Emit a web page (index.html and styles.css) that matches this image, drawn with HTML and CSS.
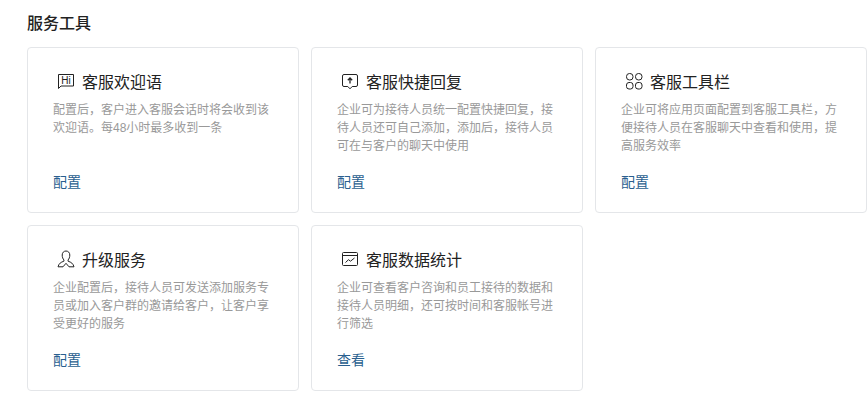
FILE: index.html
```html
<!DOCTYPE html>
<html lang="zh-CN">
<head>
    <meta charset="UTF-8">
    <title>服务工具</title>
    <link rel="stylesheet" href="styles.css">
</head>
<body>
    <h2 class="section-title">服务工具</h2>
    <div class="cards">
        <div class="card">
            <div class="card-head">
                <svg class="icon" viewBox="0 0 18 18"><path d="M1.500 2.500h15v11.500H4l-2.500 2.500z"/><text class="icon-text" x="9" y="12.300" text-anchor="middle">Hi</text></svg>
                <span class="card-title">客服欢迎语</span>
            </div>
            <p class="card-desc">配置后，客户进入客服会话时将会收到该欢迎语。每48小时最多收到一条</p>
            <a class="card-link">配置</a>
        </div>
        <div class="card">
            <div class="card-head">
                <svg class="icon" viewBox="0 0 18 18"><path d="M3 2.500h12A1.500 1.500 0 0 1 16.500 4v9a1.500 1.500 0 0 1-1.500 1.500h-3.800L9 16.800l-2.200-2.300H3A1.500 1.500 0 0 1 1.500 13V4A1.500 1.500 0 0 1 3 2.500z"/><path d="M9 11.500V6M6.800 8.200L9 6l2.200 2.200" class="icon-bold"/></svg>
                <span class="card-title">客服快捷回复</span>
            </div>
            <p class="card-desc">企业可为接待人员统一配置快捷回复，接待人员还可自己添加，添加后，接待人员可在与客户的聊天中使用</p>
            <a class="card-link">配置</a>
        </div>
        <div class="card">
            <div class="card-head">
                <svg class="icon" viewBox="0 0 18 18"><rect x="1.500" y="1.500" width="6.500" height="6.500" rx="3"/><rect x="10.500" y="1.500" width="6.500" height="6.500" rx="3"/><rect x="1.500" y="10.500" width="6.500" height="6.500" rx="2.500"/><rect x="10.500" y="10.500" width="6.500" height="6.500" rx="2.500"/></svg>
                <span class="card-title">客服工具栏</span>
            </div>
            <p class="card-desc">企业可将应用页面配置到客服工具栏，方便接待人员在客服聊天中查看和使用，提高服务效率</p>
            <a class="card-link">配置</a>
        </div>
        <div class="card">
            <div class="card-head">
                <svg class="icon" viewBox="0 0 18 18"><path d="M9 1C6.800 1 5.200 2.700 5.200 5c0 2.200.7 3.900 1.800 5l-.2 1.300C4 12 1.800 13.600 1 16.800h5l3-3.500 3 3.500h5c-.8-3.200-3-4.800-5.800-5.500L11 10c1.100-1.100 1.800-2.800 1.800-5 0-2.300-1.600-4-3.800-4z"/></svg>
                <span class="card-title">升级服务</span>
            </div>
            <p class="card-desc">企业配置后，接待人员可发送添加服务专员或加入客户群的邀请给客户，让客户享受更好的服务</p>
            <a class="card-link">配置</a>
        </div>
        <div class="card">
            <div class="card-head">
                <svg class="icon" viewBox="0 0 18 18"><rect x="1.500" y="2.500" width="15" height="13" rx="1"/><path d="M1.500 5.500h15M4.500 12.500l3-2.800 2 1.500 4-3.200"/></svg>
                <span class="card-title">客服数据统计</span>
            </div>
            <p class="card-desc">企业可查看客户咨询和员工接待的数据和接待人员明细，还可按时间和客服帐号进行筛选</p>
            <a class="card-link">查看</a>
        </div>
    </div>
</body>
</html>
```

FILE: styles.css
```css
body {
    margin: 0;
    padding: 14px 0 0 27px;
    background: #fff;
    font-family: "Liberation Sans", "Noto Sans CJK SC", sans-serif;
}
.section-title {
    margin: 0 0 13px;
    font-size: 16px;
    line-height: 20px;
    font-weight: 500;
    color: #222;
}
.cards {
    display: grid;
    grid-template-columns: repeat(3, 272px);
    grid-auto-rows: 166px;
    gap: 12px;
}
.card {
    box-sizing: border-box;
    display: flex;
    flex-direction: column;
    padding: 24px 25px 20px;
    border: 1px solid #e4e6e9;
    border-radius: 4px;
}
.card-head {
    display: flex;
    align-items: center;
    gap: 7px;
    padding-left: 4px;
    height: 20px;
    margin-top: -1px;
}
.icon {
    width: 18px;
    height: 18px;
    fill: none;
    stroke: #222;
    stroke-width: 1;
}
.icon-bold {
    stroke-width: 1.300;
}
.icon-text {
    font-size: 10px;
    font-family: "Liberation Sans", sans-serif;
    fill: #222;
    stroke: none;
}
.card-title {
    font-size: 16px;
    color: #222;
}
.card-desc {
    flex: 1;
    margin: 10px 0 0;
    font-size: 12px;
    line-height: 18px;
    color: #999;
}
.card-link {
    font-size: 14px;
    line-height: 20px;
    color: #2a5f8f;
}
```
